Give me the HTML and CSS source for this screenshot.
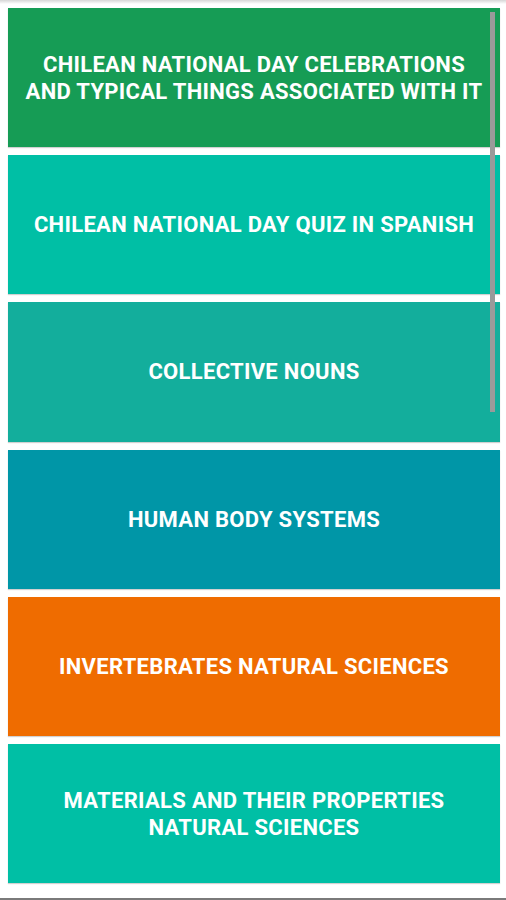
FILE: index.html
```html
<!DOCTYPE html>
<html>
<head>
<meta charset="utf-8">
<link rel="stylesheet" href="styles.css">
</head>
<body>
<div class="screen">
  <div class="list">
    <div class="card c-green">CHILEAN NATIONAL DAY CELEBRATIONS<br>AND TYPICAL THINGS ASSOCIATED WITH IT</div>
    <div class="card c-teal">CHILEAN NATIONAL DAY QUIZ IN SPANISH</div>
    <div class="card c-sea">COLLECTIVE NOUNS</div>
    <div class="card c-cyan">HUMAN BODY SYSTEMS</div>
    <div class="card c-orange">INVERTEBRATES NATURAL SCIENCES</div>
    <div class="card c-teal">MATERIALS AND THEIR PROPERTIES<br>NATURAL SCIENCES</div>
  </div>
  <div class="scrollbar"></div>
</div>
</body>
</html>
```

FILE: styles.css
```css
html, body {
  margin: 0;
  padding: 0;
  background: #ffffff;
}
body {
  width: 506px;
  height: 900px;
  overflow: hidden;
  font-family: Roboto, "Liberation Sans", sans-serif;
}
.screen {
  position: relative;
  width: 506px;
  height: 900px;
  overflow: hidden;
}
.screen::before {
  content: "";
  position: absolute;
  left: 0;
  right: 0;
  top: 0;
  height: 4px;
  background: linear-gradient(#d6d6d6, #ffffff);
}
.screen::after {
  content: "";
  position: absolute;
  left: 0;
  right: 0;
  bottom: 0;
  height: 2px;
  background: #7a7a7a;
}
.list {
  display: flex;
  flex-direction: column;
  gap: 8px;
  padding: 8px 6px 0 8px;
}
.card {
  height: 139.2px;
  display: flex;
  align-items: center;
  justify-content: center;
  text-align: center;
  color: #ffffff;
  font-weight: 700;
  font-size: 22px;
  letter-spacing: 0.3px;
  line-height: 27px;
  padding: 0 4px;
  box-sizing: border-box;
  white-space: nowrap;
  box-shadow: 0 1px 1px rgba(0, 0, 0, 0.18);
}
.c-green { background: #169c55; }
.c-teal { background: #00bfa5; }
.c-sea { background: #13ae9c; }
.c-cyan { background: #0096a7; }
.c-orange { background: #ef6c00; }
.scrollbar {
  position: absolute;
  left: 490px;
  top: 12px;
  width: 5px;
  height: 400px;
  background: #9a9a9a;
}
```
